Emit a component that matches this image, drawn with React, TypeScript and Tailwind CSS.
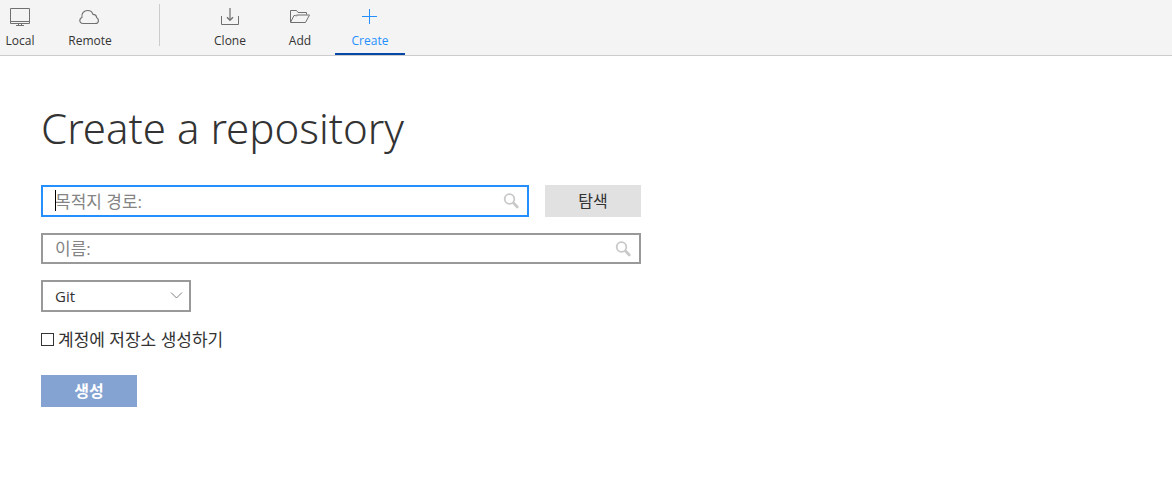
import type { ReactNode } from "react";

function Icon({ children }: { children: ReactNode }) {
  return (
    <svg width="22" height="20" viewBox="0 0 22 20" fill="none" stroke="currentColor" aria-hidden="true">
      {children}
    </svg>
  );
}

const monitor = (
  <Icon>
    <path d="M1.5 1.5h19v15h-19z M1.5 14.5h19 M9.5 16.5v2 M12.5 16.5v2 M7 18.5h8" />
  </Icon>
);

const cloud = (
  <Icon>
    <path
      strokeWidth="1.2"
      d="M4 16.5C2 16.5 .8 15.2 .8 13.6C.8 12 1.6 10.9 2.9 10.5C2.3 6.2 5 3.5 8.6 3.5C11.4 3.5 13.3 5 14 7.3C16.2 7.3 17.4 8.5 17.6 10.4C18.8 11.1 19.4 12.2 19.4 13.4C19.4 15.3 18 16.5 16.2 16.5Z"
    />
  </Icon>
);

const download = (
  <Icon>
    <path d="M2.5 9v8.5h17V9" />
    <path stroke="#a3a3a3" strokeWidth="2" d="M11 1v11" />
    <path strokeWidth="1.4" d="M8 10.3l3 3l3-3" />
  </Icon>
);

const folder = (
  <Icon>
    <path d="M1.5 15.5v-12h6l1.5 2h8.5v2.5 M1.5 15.5h15l4-7.5" />
    <path stroke="#999999" strokeWidth="1.5" d="M20.5 8h-12l-2 1" />
    <path d="M6.5 8.5h-1.5l-3.3 6.5" />
  </Icon>
);

const plus = (
  <Icon>
    <path d="M10.5 2v15 M3 9.5h15" />
  </Icon>
);

function Tab({ label, icon, active, first }: { label: string; icon: ReactNode; active?: boolean; first?: boolean }) {
  return (
    <button
      type="button"
      className={`flex shrink-0 flex-col items-center border-b-2 pt-[7px] text-xs ${first ? "w-10" : "w-[70px]"} ${
        active ? "border-[#0747a6] text-[#2490ff]" : "border-transparent text-[#333333]"
      }`}
    >
      <span className={active ? "text-[#2490ff]" : "text-[#707070]"}>{icon}</span>
      <span className="mt-[6px]">{label}</span>
    </button>
  );
}

function Search() {
  return (
    <svg
      className="pointer-events-none absolute inset-y-0 right-[10px] my-auto"
      width="16"
      height="16"
      viewBox="0 0 16 16"
      fill="none"
      stroke="#c8c8c8"
      aria-hidden="true"
    >
      <circle cx="6.5" cy="6" r="4.8" strokeWidth="1.8" />
      <path d="M10.5 10l3.8 4" strokeWidth="2.6" strokeLinecap="round" />
    </svg>
  );
}

const field =
  "block w-full border-2 bg-white pr-8 pl-3 text-[17px] text-[#333333] outline-none placeholder:text-[#848484]";

export default function App() {
  return (
    <div className="min-h-screen bg-white font-['Open_Sans','Noto_Sans_CJK_KR',sans-serif] text-[#333333]">
      <nav className="flex h-14 border-b border-[#cccccc] bg-[#f4f4f4]">
        <Tab first label="Local" icon={monitor} />
        <div className="w-[15px] shrink-0" />
        <Tab label="Remote" icon={cloud} />
        <div className="mt-1 mr-[35px] ml-[34px] h-[42px] w-px shrink-0 bg-[#cccccc]" />
        <Tab label="Clone" icon={download} />
        <Tab label="Add" icon={folder} />
        <Tab active label="Create" icon={plus} />
      </nav>

      <main className="max-w-[641px] pt-[42px] pl-[41px]">
        <h1 className="font-['Noto_Sans',sans-serif] text-[42px] leading-[60px] font-[350]">Create a repository</h1>
        <form className="mt-[27px] flex flex-col gap-4" onSubmit={(e) => e.preventDefault()}>
          <div className="flex gap-4">
            <div className="relative flex-1">
              <input
                type="text"
                aria-label="목적지 경로"
                placeholder="목적지 경로:"
                className={`${field} h-8 border-[#2490ff]`}
              />
              <span className="absolute top-[5px] left-[14px] h-[21px] w-px bg-black" />
              <Search />
            </div>
            <button type="button" className="h-8 w-24 bg-[#e1e1e1] text-[16px]">
              탐색
            </button>
          </div>
          <div className="relative">
            <input
              type="text"
              aria-label="이름"
              placeholder="이름:"
              className={`${field} h-[31px] border-[#999999]`}
            />
            <Search />
          </div>
          <div className="relative w-[150px]">
            <select
              aria-label="Git"
              className="block h-8 w-full appearance-none border-2 border-[#999999] bg-white pl-3 text-[15px] outline-none"
            >
              <option>Git</option>
            </select>
            <svg
              className="pointer-events-none absolute top-[11px] right-2"
              width="13"
              height="9"
              viewBox="0 0 13 9"
              fill="none"
              stroke="#808080"
              aria-hidden="true"
            >
              <path d="M1 1.5l5.5 5.5l5.5-5.5" />
            </svg>
          </div>
          <label className="flex h-[23px] items-center gap-1 self-start text-[17px]">
            <input type="checkbox" className="size-[13px] appearance-none border border-[#333333] bg-white" />
            계정에 저장소 생성하기
          </label>
          <button type="submit" className="mt-2 h-8 w-24 bg-[#84a3d3] text-[16px] font-bold text-white">
            생성
          </button>
        </form>
      </main>
    </div>
  );
}
